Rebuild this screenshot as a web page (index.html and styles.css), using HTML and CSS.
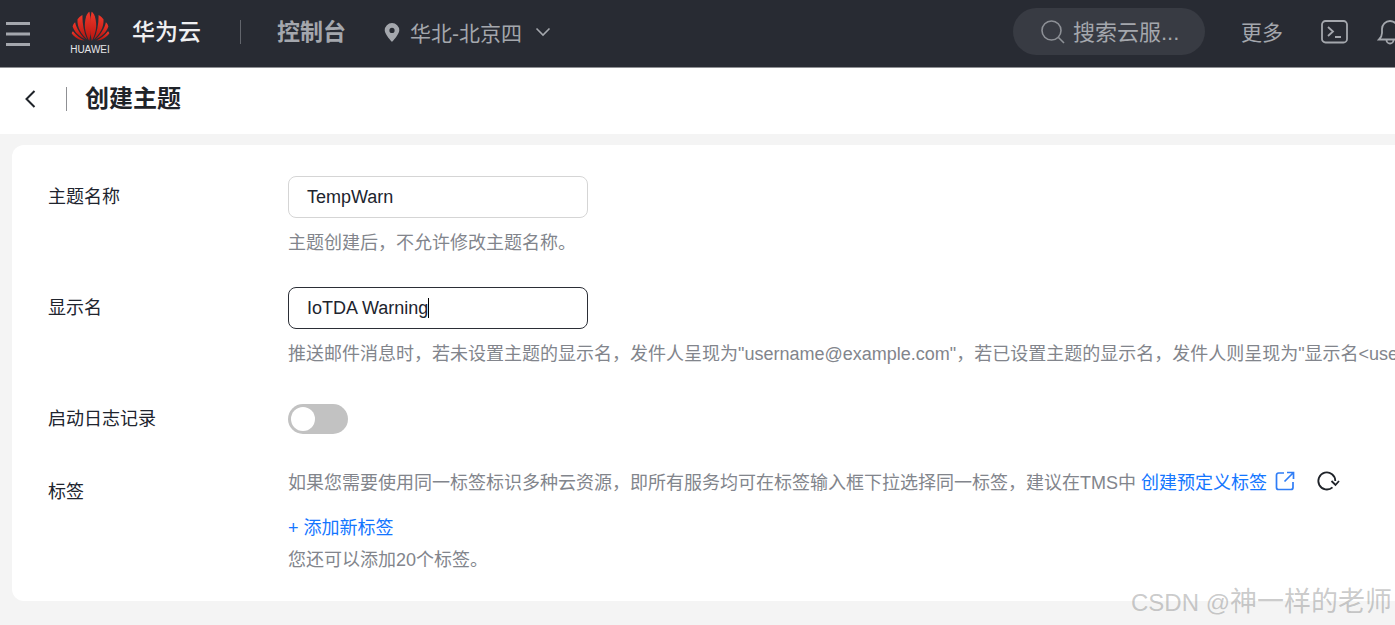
FILE: index.html
```html
<!DOCTYPE html>
<html lang="zh">
<head>
<meta charset="utf-8">
<title>创建主题</title>
<link rel="stylesheet" href="styles.css">
</head>
<body>
<header class="topbar">
  <svg class="menu" width="24" height="26" viewBox="0 0 24 26"><path d="M0 2.500h24M0 13h24M0 23.500h24" stroke="#a4a7ad" stroke-width="3"/></svg>
  <div class="logo">
    <svg width="39" height="31" viewBox="0 0 36 30" preserveAspectRatio="none">
      <defs><linearGradient id="r" x1="0" y1="0" x2="0" y2="1"><stop offset="0" stop-color="#f0392b"/><stop offset="1" stop-color="#b5140f"/></linearGradient></defs>
      <g fill="url(#r)">
        <path d="M16.800 29 C13 21 11.500 14 14 5 C15 2.500 16 1.500 17 .8 C19 10 19 20 16.800 29Z"/>
        <path d="M19.200 29 C23 21 24.500 14 22 5 C21 2.500 20 1.500 19 .8 C17 10 17 20 19.200 29Z"/>
        <path d="M15 27.500 C9.500 22.500 5.500 16 6 8 C7 6.500 8.500 4.800 10.500 3.800 C10.500 13 12 21 15 27.500Z"/>
        <path d="M21 27.500 C26.500 22.500 30.500 16 30 8 C29 6.500 27.500 4.800 25.500 3.800 C25.500 13 24 21 21 27.500Z"/>
        <path d="M13.500 27.500 C8 25 3.500 21 1.500 15 C1.800 13.500 2.500 12 3.800 10.800 C5 17 9 23 13.500 27.500Z"/>
        <path d="M22.500 27.500 C28 25 32.500 21 34.500 15 C34.200 13.500 33.500 12 32.200 10.800 C31 17 27 23 22.500 27.500Z"/>
        <path d="M12.500 28.500 C8 28.500 3.500 26 .6 21.500 C1 20.500 1.300 20 1.800 19.500 C5 23.500 8.500 26.500 12.500 28.500Z"/>
        <path d="M23.500 28.500 C28 28.500 32.500 26 35.400 21.500 C35 20.500 34.700 20 34.200 19.500 C31 23.500 27.500 26.500 23.500 28.500Z"/>
      </g>
    </svg>
    <span class="logo-word">HUAWEI</span>
  </div>
  <span class="brand">华为云</span>
  <span class="bar-divider"></span>
  <span class="console">控制台</span>
  <svg class="pin" width="18" height="20" viewBox="0 0 18 20"><path fill-rule="evenodd" fill="#a4a7ad" d="M9 1a7.300 7.300 0 0 0-7.300 7.300C1.700 12.500 9 20 9 20s7.300-7.500 7.300-11.700A7.300 7.300 0 0 0 9 1Zm0 4.800a2.600 2.600 0 1 1 0 5.200 2.600 2.600 0 0 1 0-5.200Z"/></svg>
  <span class="region">华北-北京四</span>
  <svg class="chev" width="16" height="10" viewBox="0 0 16 10"><path d="M1.500 1.500 8 8l6.500-6.500" fill="none" stroke="#a4a7ad" stroke-width="1.600"/></svg>
  <div class="search">
    <svg width="26" height="26" viewBox="0 0 26 26"><circle cx="11.500" cy="11.500" r="9.500" fill="none" stroke="#8d9096" stroke-width="1.600"/><path d="m18.500 18.500 5.500 5.500" stroke="#8d9096" stroke-width="1.600"/></svg>
    <span class="search-text">搜索云服...</span>
  </div>
  <span class="more">更多</span>
  <svg class="term" width="28" height="24" viewBox="0 0 28 24"><rect x="1" y="1" width="25" height="21.500" rx="3.500" fill="none" stroke="#a4a7ad" stroke-width="1.800"/><path d="m7 7 5 4.500-5 4.500M14 17h6" fill="none" stroke="#a4a7ad" stroke-width="1.800"/></svg>
  <svg class="bell" width="26" height="28" viewBox="0 0 26 28"><path d="M2 20.500c2-2 3-3.500 3-6.500V10a8 8 0 0 1 16 0v4c0 3 1 4.500 3 6.500ZM9.500 21a3.500 3.500 0 0 0 7 0" fill="none" stroke="#a4a7ad" stroke-width="1.800"/></svg>
</header>

<div class="subbar">
  <svg class="back" width="14" height="20" viewBox="0 0 14 20"><path d="M11.500 2 3.500 10l8 8" fill="none" stroke="#1f2329" stroke-width="2"/></svg>
  <span class="sub-divider"></span>
  <h1>创建主题</h1>
</div>

<main class="card">
  <div class="row row-name">
    <label class="label">主题名称</label>
    <div class="field">
      <div class="input">TempWarn</div>
      <p class="help">主题创建后，不允许修改主题名称。</p>
    </div>
  </div>
  <div class="row row-display">
    <label class="label">显示名</label>
    <div class="field">
      <div class="input focus">IoTDA Warning<span class="caret"></span></div>
      <p class="help nowrap">推送邮件消息时，若未设置主题的显示名，发件人呈现为"username@example.com"，若已设置主题的显示名，发件人则呈现为"显示名&lt;username@example.com&gt;"。</p>
    </div>
  </div>
  <div class="row row-log">
    <label class="label">启动日志记录</label>
    <span class="switch"><span class="knob"></span></span>
  </div>
  <div class="row row-tags">
    <label class="label tag-label">标签</label>
    <div class="field">
      <div class="tag-note">
        <span class="help-inline">如果您需要使用同一标签标识多种云资源，即所有服务均可在标签输入框下拉选择同一标签，建议在TMS中</span>
        <a class="link">创建预定义标签</a>
        <svg class="ext" width="20" height="20" viewBox="0 0 20 20"><path d="M9 2H3.500A2 2 0 0 0 1.500 4v12.500a2 2 0 0 0 2 2H16a2 2 0 0 0 2-2V11M12 1.500h6.500V8M18 2l-8.500 8.500" fill="none" stroke="#2f7df6" stroke-width="1.700"/></svg>
        <svg class="refresh" width="24" height="22" viewBox="0 0 24 22"><path d="M19.300 11A8.500 8.500 0 1 0 16.500 17.300" fill="none" stroke="#1f2329" stroke-width="1.800"/><path d="m15.500 11 4 4 3.500-4" fill="none" stroke="#1f2329" stroke-width="1.800"/></svg>
      </div>
      <a class="link add">+ 添加新标签</a>
      <p class="help remain">您还可以添加20个标签。</p>
    </div>
  </div>
</main>

<div class="watermark"><span class="wm-latin">CSDN @</span>神一样的老师</div>
</body>
</html>
```

FILE: styles.css
```css
* { box-sizing: border-box; }
html, body { margin: 0; height: 625px; overflow: hidden; }
body {
  position: relative;
  background: #f4f4f4;
  font-family: "Liberation Sans", "Noto Sans CJK SC", sans-serif;
  font-size: 18px;
  color: #252b3a;
}
.topbar {
  height: 68px;
  background: #282b33;
  border-bottom: 1px solid #8f9094;
  display: flex;
  align-items: center;
  padding-left: 6px;
  overflow: hidden;
  white-space: nowrap;
}
.topbar > * { flex: none; }
.logo { width: 40px; margin-left: 40px; display: flex; flex-direction: column; align-items: center; color: #e6e6e8; }
.logo svg { display: block; }
.logo-word { font-size: 10px; line-height: 12px; margin-top: 2px; }
.brand { margin-left: 22px; font-size: 23px; font-weight: 500; color: #f0f0f2; margin-top: -8px; }
.bar-divider { width: 1px; height: 24px; background: #62656c; margin-left: 39px; margin-top: -4px; }
.console { margin-left: 36px; font-size: 23px; font-weight: 700; color: #a4a7ad; margin-top: -8px; }
.pin { margin-left: 37px; margin-top: -3px; }
.region { margin-left: 9px; font-size: 21px; color: #a4a7ad; margin-top: -4px; }
.chev { margin-left: 13px; margin-top: -3px; }
.search {
  width: 192px;
  height: 47px;
  margin-left: 462px;
  margin-top: -4px;
  padding-left: 27px;
  border-radius: 24px;
  background: #383b43;
  color: #a4a7ad;
  font-size: 22px;
  display: flex;
  align-items: center;
  gap: 7px;
}
.search-text { padding-bottom: 3px; }
.more { margin-left: 36px; font-size: 21px; color: #a4a7ad; margin-top: -6px; }
.term { margin-left: 38px; margin-top: -3px; }
.bell { margin-left: 28px; margin-top: -1px; }

.subbar {
  height: 66px;
  background: #fff;
  display: flex;
  align-items: center;
  padding: 0 0 5px 23px;
}
.back { flex: none; }
.sub-divider { flex: none; width: 1px; height: 24px; background: #8f9094; margin-left: 29px; }
h1 { margin: 0 0 0 18px; font-size: 24px; line-height: 32px; font-weight: 700; color: #1f2329; }

.card {
  margin: 11px 0 0 12px;
  height: 456px;
  background: #fff;
  border-radius: 12px 0 0 12px;
  padding: 31px 0 0 36px;
  overflow: hidden;
}
.row { display: flex; white-space: nowrap; }
.label { flex: none; width: 240px; line-height: 42px; color: #20242e; }
.input {
  width: 300px;
  height: 42px;
  border: 1px solid #d5d5d5;
  border-radius: 8px;
  padding-left: 18px;
  line-height: 40px;
  background: #fff;
  color: #20242e;
}
.input.focus { border-color: #2b2e36; }
.caret { display: inline-block; width: 1px; height: 20px; background: #000; vertical-align: -4px; }
.help { margin: 0; color: #82858c; line-height: 24px; padding-top: 13px; }
.nowrap { white-space: nowrap; }
.row-display { margin-top: 32px; }
.row-log { margin-top: 38px; align-items: center; height: 30px; }
.row-log .label { line-height: 30px; }
.switch {
  display: flex;
  align-items: center;
  width: 60px;
  height: 30px;
  border-radius: 15px;
  background: #c2c2c2;
  padding-left: 3px;
}
.knob { width: 24px; height: 24px; border-radius: 50%; background: #fff; }
.row-tags { margin-top: 32px; }
.tag-label { line-height: 52px; }
.tag-note { display: flex; align-items: center; height: 30px; }
.help-inline { color: #82858c; }
.link { color: #1476ff; }
.tag-note .link { margin-left: 5px; }
.ext { margin-left: 8px; flex: none; }
.refresh { margin-left: 21px; flex: none; }
.add { display: block; margin-top: 20px; line-height: 24px; }
.remain { padding-top: 8px; }

.watermark {
  position: absolute;
  right: 3px;
  top: 584px;
  font-size: 27px;
  line-height: 36px;
  color: rgba(130, 130, 130, .42);
  white-space: nowrap;
}
.wm-latin { font-size: 24px; }
```
